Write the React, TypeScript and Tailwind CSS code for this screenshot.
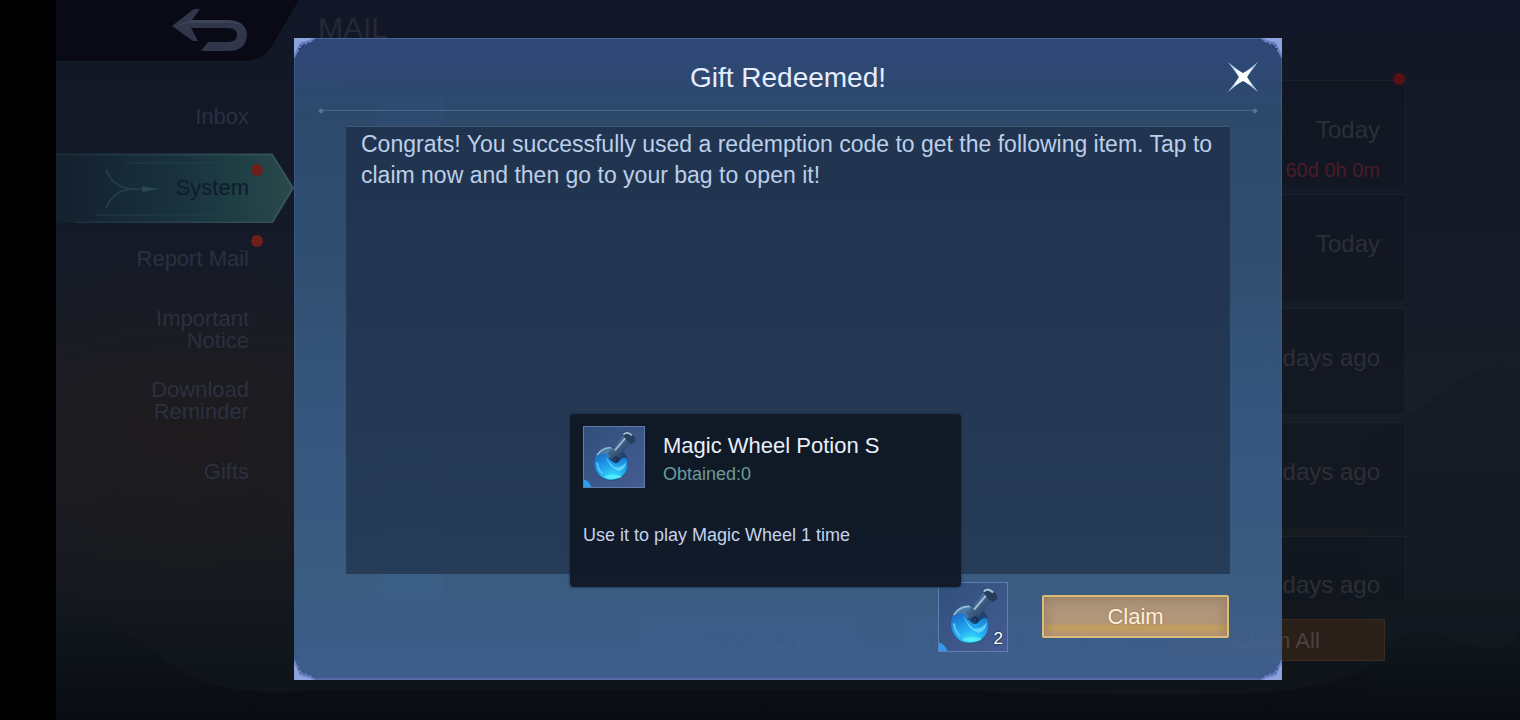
import { useState } from "react";

type Folder = {
  label: string;
  unread?: boolean;
};

type Mail = {
  title: string;
  date: string;
  expires?: string;
  unread?: boolean;
};

const folders: Folder[] = [
  { label: "Inbox" },
  { label: "System", unread: true },
  { label: "Report Mail", unread: true },
  { label: "Important Notice" },
  { label: "Download Reminder" },
  { label: "Gifts" },
];

const mails: Mail[] = [
  { title: "", date: "Today", expires: "60d 0h 0m", unread: true },
  { title: "", date: "Today" },
  { title: "Gift Redeemed!", date: "1 days ago" },
  { title: "", date: "1 days ago" },
  { title: "Gift Redeemed!", date: "1 days ago" },
];

export default function App() {
  const [active, setActive] = useState("System");

  return (
    <div className="relative flex min-h-screen overflow-hidden bg-black font-['Liberation_Sans',Arial,sans-serif]">
      {/* Notch side of the phone */}
      <div className="w-14 shrink-0" />

      <div className="relative flex min-w-0 flex-1 flex-col bg-[linear-gradient(180deg,#121727_0%,#141a28_35%,#191d26_60%,#15191f_80%,#0d1317_100%)]">
        <Scenery />

        <header className="relative flex h-[60px]">
          <BackButton />
          <h1 className="pt-3 pl-6 text-3xl leading-8 text-[#262935]">MAIL</h1>
        </header>

        <div className="relative flex flex-1">
          <nav className="w-[238px] shrink-0 pt-[21px]">
            {folders.map((folder) => (
              <FolderTab
                key={folder.label}
                folder={folder}
                active={folder.label === active}
                onSelect={() => setActive(folder.label)}
              />
            ))}
          </nav>

          <main className="flex min-w-0 flex-1 flex-col pt-5 pr-[114px] pl-[51px]">
            <ul className="flex h-[520px] flex-col gap-2">
              {mails.map((mail, i) => (
                <MailRow key={i} mail={mail} last={i === mails.length - 1} />
              ))}
            </ul>
            <div className="mt-[19px] flex justify-end gap-12 pr-[21px] text-[22px]">
              <button className="h-[42px] w-[216px] border-b border-[#34447c] bg-[#171f3a] text-[#000308]">
                Delete All
              </button>
              <button className="h-[42px] w-[216px] border-b border-[#34447c] bg-[#171f3a] text-[#000308]">
                Mark All as Read
              </button>
              <button className="h-[42px] w-[216px] border border-[#3c2c20] bg-[#2a2019] text-[#4a433f]">
                Claim All
              </button>
            </div>
          </main>
        </div>
      </div>

      <div className="absolute inset-0 flex items-center justify-center pb-[3px] pl-14">
        <GiftDialog />
      </div>
    </div>
  );
}

/* Mail screen */

function BackButton() {
  return (
    <button aria-label="Back" className="relative h-[60px] w-[238px] shrink-0">
      <svg viewBox="0 0 250 61" className="absolute top-0 left-0 h-[61px] w-[250px]">
        <path d="M0 0H242L216 44Q206 60 190 60H0Z" fill="#0a0a17" />
        <path d="M0 60H190Q206 60 216 44L242 0" fill="none" stroke="#080b12" strokeWidth="1.5" />
        <path
          d="M116 26 138 9H144L136 20H172Q191 21 191 35Q190 51 172 51H145L152 42H172Q181 42 181 35Q181 28 172 28H135L142 41H137Z"
          fill="#31364a"
        />
        <path d="M118 26 136 20H172Q183 21 188 27Q182 23 172 23H134Z" fill="#3d4357" />
      </svg>
    </button>
  );
}

function FolderTab({ folder, active, onSelect }: { folder: Folder; active: boolean; onSelect: () => void }) {
  return (
    <button
      onClick={onSelect}
      className="relative flex h-[71px] w-full items-center justify-end pr-[45px] text-right text-[22px] leading-[22px]"
    >
      {active && <ActiveTabShape />}
      <span className={`relative max-w-[120px] ${active ? "text-[#101c2c]" : "text-[#2b3040]"}`}>{folder.label}</span>
      {folder.unread && <span className="absolute top-3 right-[31px] size-3 rounded-full bg-[#6d1f1a]" />}
    </button>
  );
}

function ActiveTabShape() {
  return (
    <svg viewBox="0 0 238 71" preserveAspectRatio="none" className="absolute inset-0 size-full">
      <defs>
        <linearGradient id="tab" x1="0" x2="1">
          <stop offset="0" stopColor="#14202e" />
          <stop offset="0.45" stopColor="#182f3c" />
          <stop offset="0.8" stopColor="#1f4046" />
          <stop offset="1" stopColor="#2b494b" />
        </linearGradient>
        <linearGradient id="tabEdge" x1="0" x2="1">
          <stop offset="0" stopColor="#182c38" />
          <stop offset="1" stopColor="#36565b" />
        </linearGradient>
      </defs>
      <path d="M0 2H216L237 36L216 71H0Z" fill="url(#tab)" />
      <path d="M0 2.500H216L237 36L216 70.500H20" fill="none" stroke="url(#tabEdge)" strokeWidth="2" />
      <path d="M70 11H206M40 63H210" stroke="#214047" strokeWidth="1" />
      <path d="M50 18Q58 36 76 37H102M50 56Q58 38 76 37" fill="none" stroke="#25424d" strokeWidth="1.500" />
      <path d="M86 34 102 37 86 40Z" fill="#2b4953" />
    </svg>
  );
}

function MailRow({ mail, last }: { mail: Mail; last: boolean }) {
  return (
    <li
      className={`relative flex shrink-0 items-center border-t border-r border-[#1b212b] bg-[#111620]/60 pr-[25px] pb-2 pl-8 ${
        last ? "h-16" : "h-[106px]"
      }`}
    >
      <span className="size-[66px] shrink-0 bg-[#1f2e55]" />
      <span className="flex-1 pl-8 text-2xl text-[#000308]">{mail.title}</span>
      <span
        className={`flex flex-col items-end text-2xl leading-8 text-[#2b2f36] ${last || mail.expires ? "pt-10" : ""}`}
      >
        {mail.date}
        {mail.expires && <span className="pt-2 text-xl leading-8 text-[#4b1c28]">{mail.expires}</span>}
      </span>
      {mail.unread && <span className="absolute -top-2 right-0 size-3 rounded-full bg-[#5a1012]" />}
    </li>
  );
}

/* Dusk sky with hills behind the mail list */
function Scenery() {
  return (
    <svg viewBox="0 0 1464 720" preserveAspectRatio="none" className="absolute inset-0 size-full">
      <defs>
        <radialGradient id="dusk" cx="0.09" cy="0.6" r="0.26">
          <stop offset="0" stopColor="#1f1b1d" stopOpacity="0.9" />
          <stop offset="1" stopColor="#1f1b1d" stopOpacity="0" />
        </radialGradient>
        <linearGradient id="hills" x1="0" x2="0" y1="0" y2="1">
          <stop offset="0" stopColor="#0c131b" stopOpacity="0" />
          <stop offset="1" stopColor="#090c12" />
        </linearGradient>
      </defs>
      <rect width="1464" height="720" fill="url(#dusk)" />
      <path d="M1310 440Q1350 420 1390 390T1464 370V720H1310Z" fill="#121922" opacity="0.5" />
      <path d="M0 600Q60 620 110 660T260 690L900 690Q1150 700 1230 690T1330 650T1400 640T1464 630V720H0Z" fill="url(#hills)" />
    </svg>
  );
}

/* Dialog */

function GiftDialog() {
  return (
    <section
      role="dialog"
      aria-labelledby="gift-title"
      className="relative w-full max-w-[988px] border-x border-t border-b-2 border-x-[#395a86] border-t-[#45669a] border-b-[#586aa6] bg-[linear-gradient(180deg,rgba(49,75,128,0.92)_0%,rgba(47,78,113,0.92)_12%,rgba(50,83,118,0.92)_35%,rgba(56,91,134,0.92)_60%,rgba(61,98,137,0.92)_85%,rgba(66,99,149,0.92)_100%)]"
    >
      <Corner className="absolute -top-px -left-px size-[22px]" />
      <Corner className="absolute -top-px -right-px size-[22px] -scale-x-100" />
      <Corner className="absolute -bottom-[2px] -left-px size-[22px] -scale-y-100" />
      <Corner className="absolute -right-px -bottom-[2px] size-[22px] -scale-100" />

      <div className="grid h-[70px] grid-cols-[1fr_auto_1fr] items-center pt-2">
        <h2 id="gift-title" className="col-start-2 text-[28px] leading-8 text-[#e6edff]">
          Gift Redeemed!
        </h2>
        <button aria-label="Close" className="mr-5 size-9 justify-self-end">
          <CloseStar />
        </button>
      </div>

      {/* Divider with an arrow tip on both ends */}
      <div className="mx-6 flex items-center">
        <span className="size-1 rotate-45 bg-[#55759a]" />
        <span className="h-px flex-1 bg-[#46678a]" />
        <span className="size-1 rotate-45 bg-[#55759a]" />
      </div>

      <div className="mx-[51px] mt-[13px] min-h-[448px] border-t border-[#3b5876] bg-[linear-gradient(180deg,rgba(31,49,76,0.9),rgba(36,56,82,0.9))] px-[15px] pt-[2px] text-[23px] leading-[31px] text-[#bccfe9]">
        <p>
          Congrats! You successfully used a redemption code to get the following item. Tap to claim now and then go to
          your bag to open it!
        </p>
      </div>

      <div className="flex items-center justify-end gap-[34px] pt-2 pr-[52px] pb-[26px]">
        <div className="relative">
          <button aria-label="Magic Wheel Potion S" className="relative block size-[70px] border border-[#5d7fae]">
            <Potion />
            <span className="absolute right-1 bottom-0 text-[17px] leading-6 text-white [text-shadow:0_0_2px_#000]">2</span>
          </button>
          <ItemTooltip />
        </div>
        <button className="h-[43px] w-[187px] rounded-xs border-2 border-[#dcbd78] bg-[linear-gradient(180deg,#ac9579_0%,#b4977a_65%,#c6a35c_78%,#c9a487_100%)] text-[22px] text-[#fff0d8] shadow-[inset_0_0_14px_rgba(125,100,80,0.6)] [text-shadow:0_0_2px_#8a6d4a]">
          Claim
        </button>
      </div>
    </section>
  );
}

function ItemTooltip() {
  return (
    <div
      role="tooltip"
      className="absolute right-[47px] bottom-[65px] w-[391px] rounded-sm bg-[#101926]/97 px-[13px] pt-3 pb-10 shadow-[0_0_3px_#14263c]"
    >
      <div className="flex gap-[18px]">
        <div className="size-[62px] border border-[#5f7ba6]">
          <Potion />
        </div>
        <div className="pt-1">
          <h3 className="text-[22px] leading-8 text-[#e8eefa]">Magic Wheel Potion S</h3>
          <p className="text-lg leading-6 text-[#6b9a9c]">Obtained:0</p>
        </div>
      </div>
      <p className="mt-[35px] text-lg leading-6 text-[#c5d3ea]">Use it to play Magic Wheel 1 time</p>
    </div>
  );
}

/* Drawings */

function Corner({ className }: { className: string }) {
  return (
    <svg viewBox="0 0 22 22" className={className}>
      <path d="M0 0H22L18 3L16 5L14 4L12 7L10 5L8 8L6 6L7 10L4 10L5 13L3 15L2 18L0 21Z" fill="#6d82c4" />
      <path d="M0 0H20L12 3L7 4L5 6L3 11L0 17Z" fill="#9db0ea" opacity="0.7" />
    </svg>
  );
}

function CloseStar() {
  return (
    <svg viewBox="0 0 36 36" className="size-full">
      <path d="M3 2 18 14 33 2 22 17 33 32 18 20 3 32 14 17Z" fill="#b4cce8" />
      <path d="M9 8 18 13 27 8 22 17 27 26 18 21 9 26 14 17Z" fill="#fbfeff" />
    </svg>
  );
}

function Potion() {
  return (
    <svg viewBox="0 0 64 64" className="size-full">
      <defs>
        <linearGradient id="tile" x1="0" y1="0" x2="1" y2="1">
          <stop offset="0" stopColor="#30507c" />
          <stop offset="1" stopColor="#455c92" />
        </linearGradient>
        <radialGradient id="liquid" cx="0.55" cy="0.9" r="0.95">
          <stop offset="0" stopColor="#3ce6fb" />
          <stop offset="0.4" stopColor="#22acf2" />
          <stop offset="1" stopColor="#1a6fc8" />
        </radialGradient>
        <linearGradient id="neck" x1="0" y1="0" x2="1" y2="1">
          <stop offset="0" stopColor="#8aaeca" />
          <stop offset="0.4" stopColor="#44678b" />
          <stop offset="1" stopColor="#142b4c" />
        </linearGradient>
      </defs>
      <rect width="64" height="64" fill="url(#tile)" />
      <path d="M0 56Q5 57 8 64H0Z" fill="#2e9dee" />
      {/* glass bulb */}
      <circle cx="29" cy="39" r="18" fill="#1c4474" />
      <path d="M12 34Q15 21 28 21L37 25L34 34L24 32Z" fill="#4a7ca6" />
      <path d="M14 30Q19 22 29 22" fill="none" stroke="#8fc2d8" strokeWidth="1.500" />
      {/* neck and lip */}
      <path d="M25 27 32 22 42 9 51 15 41 27 37 34 29 34Z" fill="url(#neck)" />
      <path d="M41 6Q46 3 50 7Q55 10 55 15L51 18Q44 15 41 6Z" fill="#263d5b" />
      <path d="M42 8Q46 4 51 9" fill="none" stroke="#a3bed0" strokeWidth="2" />
      <path d="M33 25 44 12" stroke="#9bbbd2" strokeWidth="2" />
      {/* liquid with its curl */}
      <path d="M12 33Q17 27 24 29Q27 35 32 38Q36 40 38 36Q42 31 46 34Q49 49 36 55Q24 59 16 51Q9 43 12 33Z" fill="url(#liquid)" />
      <path d="M22 29Q26 38 33 43Q40 44 45 37Q44 46 37 47Q27 44 22 29Z" fill="#7be4ff" opacity="0.7" />
      <path d="M31 35Q33 31 36 33Q37 36 34 36" fill="none" stroke="#0f2d55" strokeWidth="1.500" />
      <path d="M14 38Q15 46 20 50" fill="none" stroke="#58c6fa" strokeWidth="2" />
      <ellipse cx="31" cy="53" rx="9" ry="2" fill="#5ff2fb" opacity="0.7" />
    </svg>
  );
}
